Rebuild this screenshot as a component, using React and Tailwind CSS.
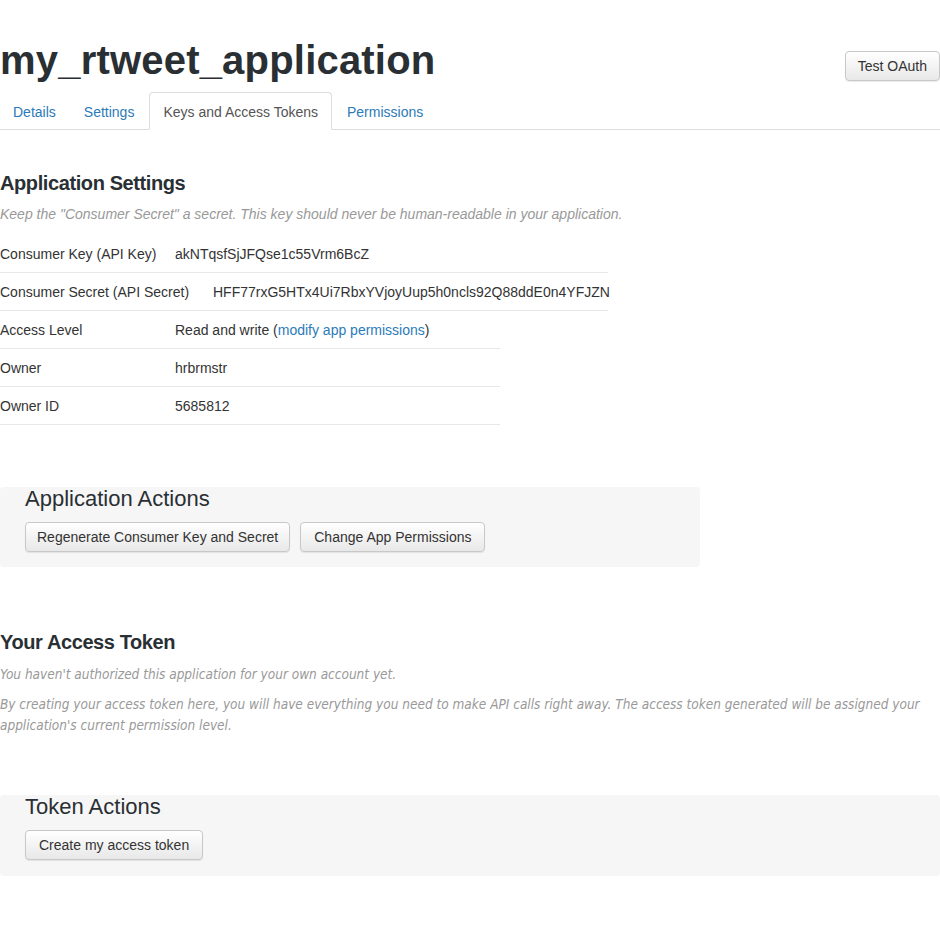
import React from 'react';

const tabs = ['Details', 'Settings', 'Keys and Access Tokens', 'Permissions'];
const narrow = { fontFamily: '"DejaVu Sans Condensed", "Liberation Sans", sans-serif' };

const Btn = ({ children, pad = 'px-[13px]', className = '' }) => (
  <button className={`h-[30px] ${pad} rounded-[4px] border border-[#c8c8c8] bg-gradient-to-b from-white to-[#e8e8e8] text-[14px] text-[#333] shadow-[0_1px_1px_rgba(0,0,0,0.08)] ${className}`}>
    {children}
  </button>
);

const Row = ({ label, width, labelWidth = 'w-[175px]', children }) => (
  <div className={`flex items-center h-[38px] pt-[2px] border-b border-[#e8e8e8] text-[14px] text-[#333] ${width}`}>
    <div className={`${labelWidth} shrink-0`}>{label}</div>
    <div>{children}</div>
  </div>
);

export default function App() {
  return (
    <div className="bg-white min-h-[936px] w-[940px] overflow-hidden text-[#333]" style={{ fontFamily: '"Liberation Sans", Arial, sans-serif' }}>
      {/* header */}
      <div className="flex justify-between items-start pt-[38px]">
        <h1 className="text-[40px] leading-[44px] font-bold text-[#292f33] tracking-[0.2px]">my_rtweet_application</h1>
        <Btn pad="px-[12px]" className="mt-[13px]">Test OAuth</Btn>
      </div>

      {/* tabs */}
      <div className="flex mt-[10px] border-b border-[#ddd] h-[38px]">
        {tabs.map((t, i) => (
          <div
            key={t}
            className={
              i === 2
                ? 'mr-[2px] px-[13px] h-[38px] flex items-center pt-[2px] text-[14px] text-[#555] bg-white border border-[#ddd] border-b-white rounded-t-[4px] -mb-px'
                : 'mr-[2px] px-[13px] h-[38px] flex items-center pt-[2px] text-[14px] text-[#2b7bb9]'
            }
          >
            {t}
          </div>
        ))}
      </div>

      {/* application settings */}
      <h2 className="mt-[40px] text-[20px] leading-[26px] font-bold text-[#292f33] tracking-[-0.4px]">Application Settings</h2>
      <p className="mt-[8px] text-[14px] leading-[20px] italic text-[#999]">
        Keep the "Consumer Secret" a secret. This key should never be human-readable in your application.
      </p>

      <div className="mt-[11px]">
        <Row label="Consumer Key (API Key)" width="w-[608px]">akNTqsfSjJFQse1c55Vrm6BcZ</Row>
        <Row label="Consumer Secret (API Secret)" width="w-[608px]" labelWidth="w-[213px]">HFF77rxG5HTx4Ui7RbxYVjoyUup5h0ncls92Q88ddE0n4YFJZN</Row>
        <Row label="Access Level" width="w-[500px]">
          Read and write (<span className="text-[#2b7bb9]">modify app permissions</span>)
        </Row>
        <Row label="Owner" width="w-[500px]">hrbrmstr</Row>
        <Row label="Owner ID" width="w-[500px]">5685812</Row>
      </div>

      {/* application actions */}
      <div className="mt-[62px] w-[700px] bg-[#f6f6f6] rounded-[4px] px-[25px] pb-[15px]">
        <h3 className="text-[22px] leading-[24px] text-[#292f33]">Application Actions</h3>
        <div className="flex gap-[10px] mt-[11px]">
          <Btn pad="px-[11px]">Regenerate Consumer Key and Secret</Btn>
          <Btn>Change App Permissions</Btn>
        </div>
      </div>

      {/* access token */}
      <h2 className="mt-[62px] text-[20px] leading-[26px] font-bold text-[#292f33] tracking-[-0.4px]">Your Access Token</h2>
      <p className="mt-[9px] text-[13.5px] leading-[20px] italic text-[#999]" style={narrow}>
        You haven't authorized this application for your own account yet.
      </p>
      <p className="mt-[10px] text-[13.5px] leading-[21px] italic text-[#999]" style={narrow}>
        By creating your access token here, you will have everything you need to make API calls right away. The access token generated will be assigned your application's current permission level.
      </p>

      {/* token actions */}
      <div className="mt-[59px] w-[940px] bg-[#f6f6f6] rounded-[4px] px-[25px] pb-[16px]">
        <h3 className="text-[22px] leading-[24px] text-[#292f33]">Token Actions</h3>
        <div className="flex mt-[11px]">
          <Btn>Create my access token</Btn>
        </div>
      </div>
    </div>
  );
}
